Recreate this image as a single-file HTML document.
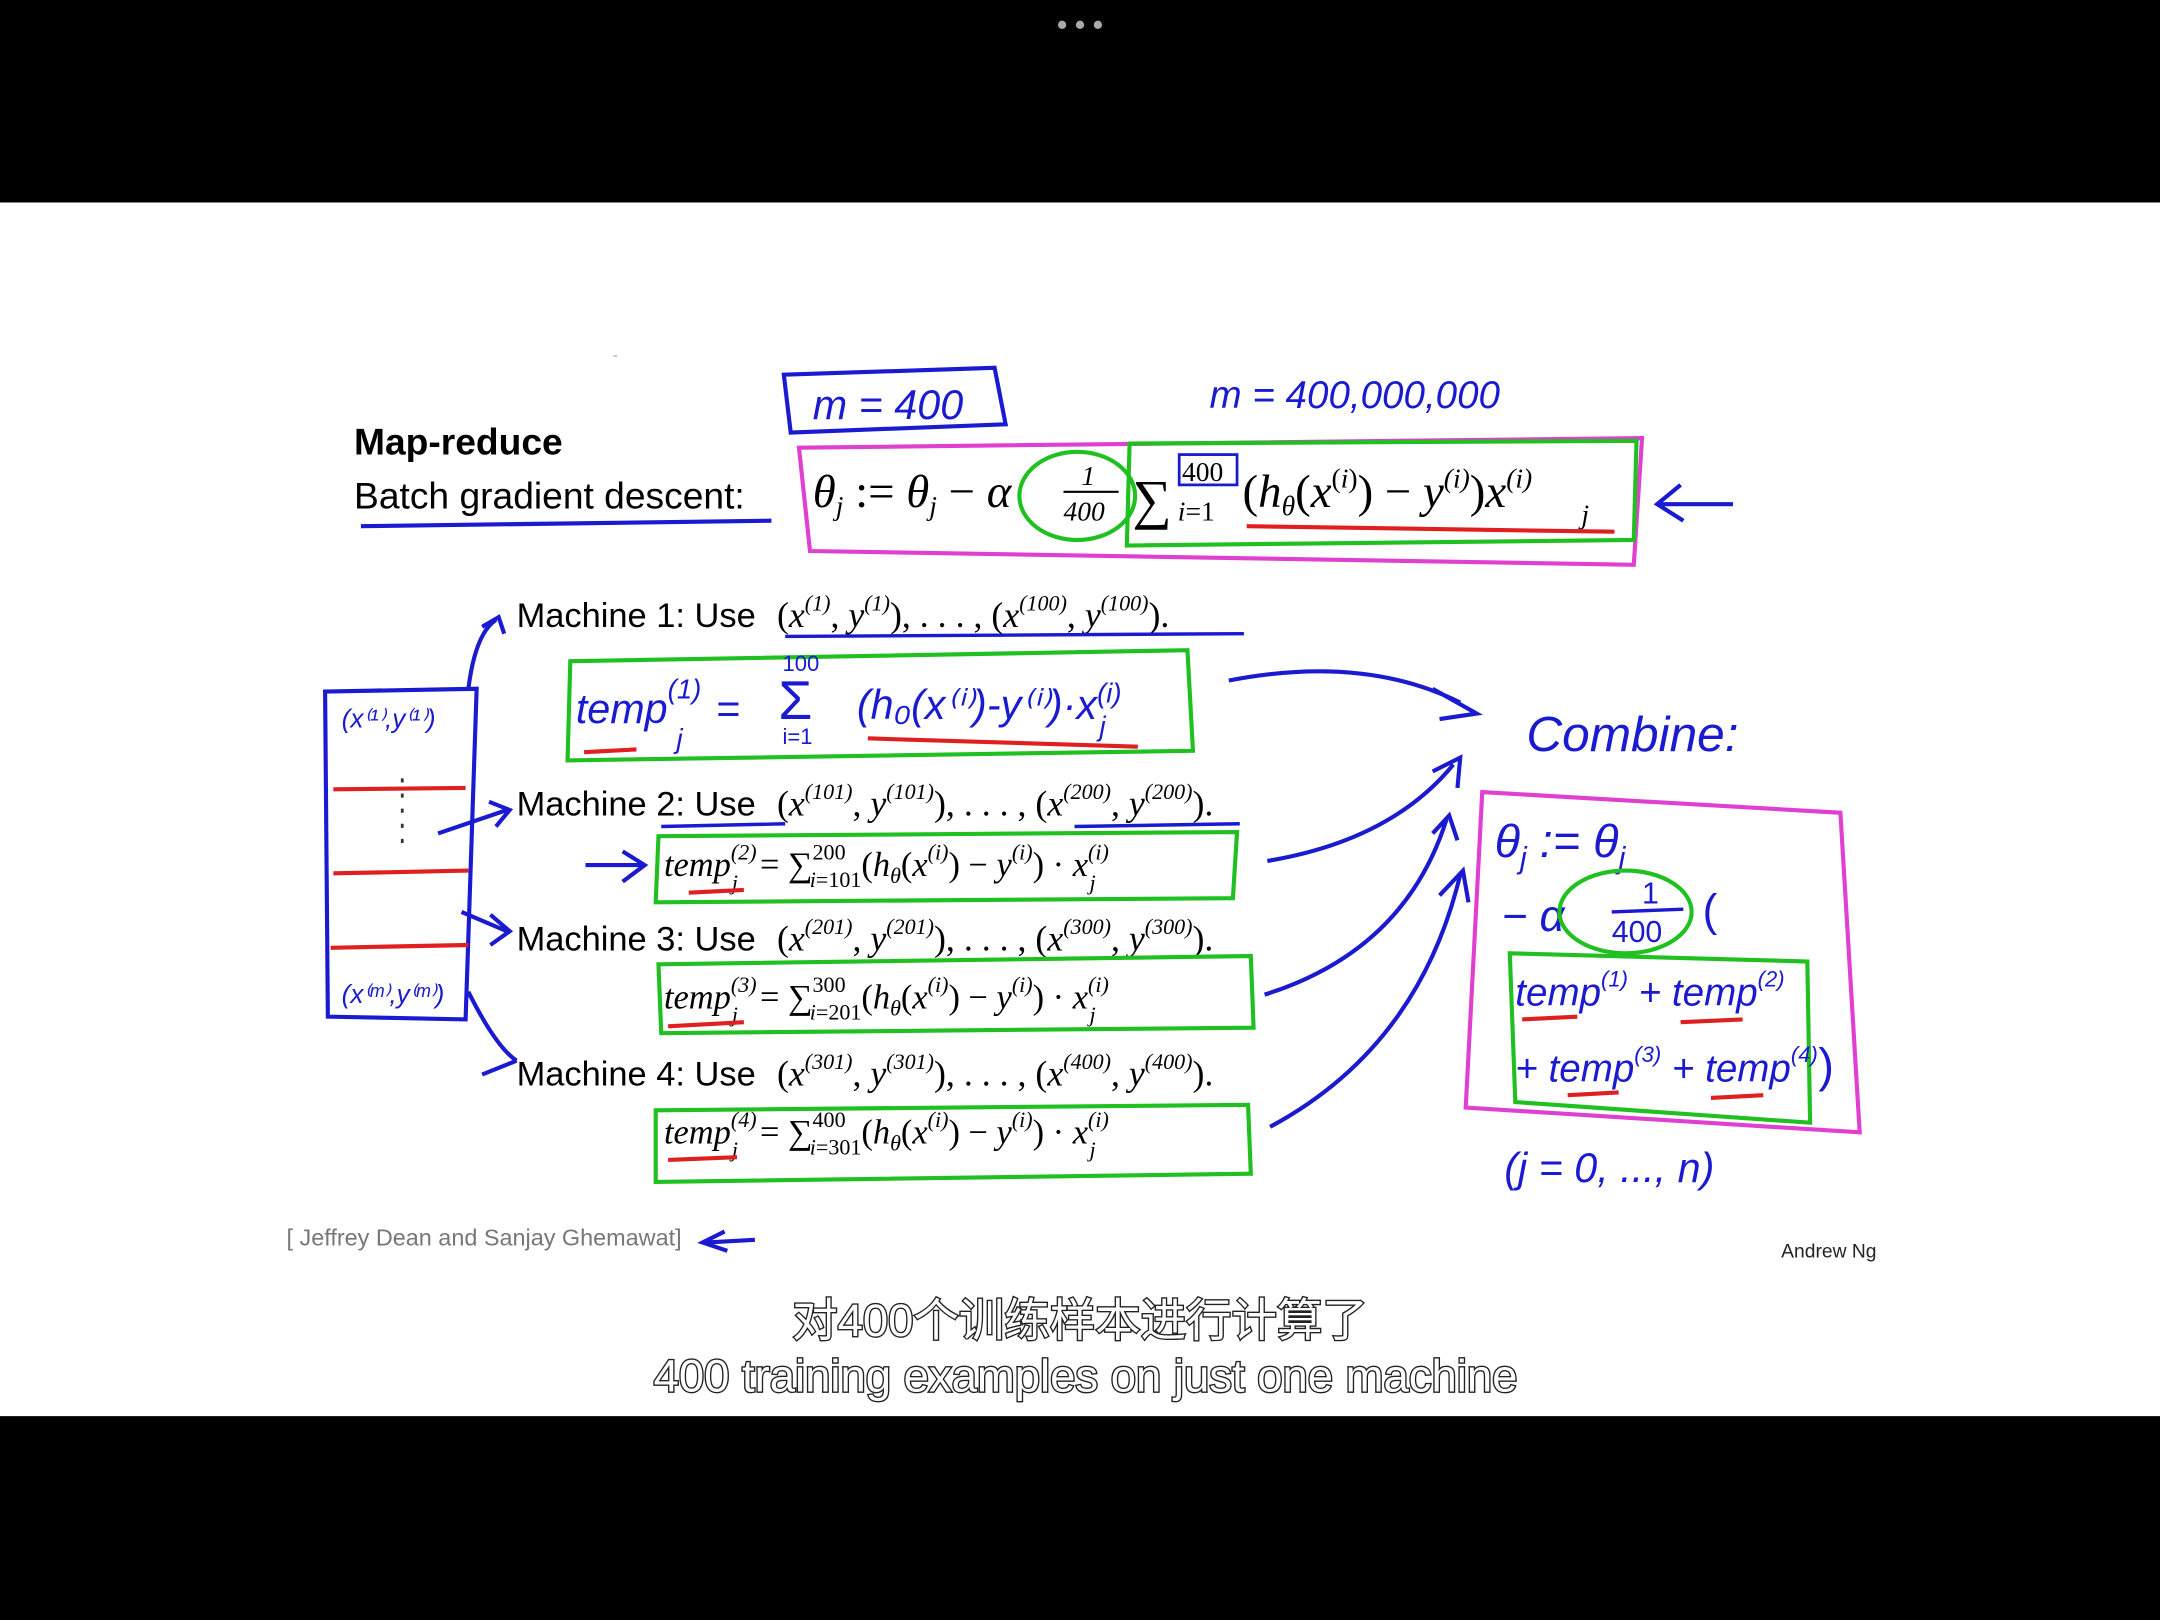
<!DOCTYPE html>
<html><head><meta charset="utf-8"><style>
html,body{margin:0;padding:0;background:#000;width:2160px;height:1620px;overflow:hidden}
svg{display:block}
.s{font-family:"Liberation Sans",sans-serif}
.m{font-family:"Liberation Serif",serif;font-style:italic}
.h{font-family:"Liberation Sans",sans-serif;fill:#1a1ad0}
</style></head><body>
<svg width="2160" height="1620" viewBox="0 0 1568 1176" xmlns="http://www.w3.org/2000/svg">
<rect x="0" y="0" width="1568" height="1176" fill="#000"/>
<rect x="0" y="147" width="1568" height="881" fill="#fff"/>
<circle cx="771" cy="18" r="3" fill="#aaa"/><circle cx="784" cy="18" r="3" fill="#aaa"/><circle cx="797" cy="18" r="3" fill="#aaa"/>

<text x="257" y="330" class="s" font-size="27" font-weight="bold">Map-reduce</text>
<text x="257" y="369" class="s" font-size="27">Batch gradient descent:</text>
<path d="M262 382 L560 378" stroke="#1a1ad0" stroke-width="3" fill="none"/>

<path d="M569 272 L722 267 L730 308 L574 314 Z" stroke="#1a1ad0" stroke-width="3" fill="none"/>
<text x="590" y="304" class="h" font-size="30" font-style="italic">m = 400</text>
<text x="878" y="296" class="h" font-size="28" font-style="italic">m = 400,000,000</text>

<path d="M580 325 L1192 318 L1186 410 L588 400 Z" stroke="#e040d0" stroke-width="3" fill="none"/>
<path d="M820 322 L1188 320 L1186 392 L818 396 Z" stroke="#20c020" stroke-width="3" fill="none"/>
<ellipse cx="782" cy="360" rx="42" ry="32" stroke="#20c020" stroke-width="3" fill="none"/>
<text x="590" y="368" class="m" font-size="34">θ<tspan font-size="20" dy="6">j</tspan><tspan dy="-6" font-style="normal"> := </tspan>θ<tspan font-size="20" dy="6">j</tspan><tspan dy="-6" font-style="normal"> − </tspan>α</text>
<text x="785" y="352" class="m" font-size="20" font-style="normal">1</text>
<path d="M772 357 L812 357" stroke="#000" stroke-width="1.5"/>
<text x="772" y="378" class="m" font-size="20" font-style="normal">400</text>
<text x="822" y="376" font-family="Liberation Serif,serif" font-size="40">∑</text>
<rect x="856" y="330" width="42" height="22" stroke="#1a1ad0" stroke-width="2" fill="none"/>
<text x="858" y="349" font-family="Liberation Serif,serif" font-size="20">400</text>
<text x="855" y="378" class="m" font-size="20">i<tspan font-style="normal">=1</tspan></text>
<text x="902" y="368" class="m" font-size="34"><tspan font-style="normal">(</tspan>h<tspan font-size="20" dy="6">θ</tspan><tspan dy="-6" font-style="normal">(</tspan>x<tspan font-size="20" dy="-14" font-style="normal">(</tspan><tspan font-size="20">i</tspan><tspan font-size="20" font-style="normal">)</tspan><tspan dy="14" font-style="normal">) − </tspan>y<tspan font-size="20" dy="-14">(i)</tspan><tspan dy="14" font-style="normal">)</tspan>x<tspan font-size="20" dy="-14">(i)</tspan></text>
<text x="1148" y="380" class="m" font-size="20">j</text>
<path d="M905 382 L1172 386" stroke="#e02020" stroke-width="3"/>
<path d="M1205 366 L1258 366 M1220 352 L1203 366 L1222 378" stroke="#1a1ad0" stroke-width="3" fill="none"/>

<path d="M236 502 L346 500 L338 740 L238 738 Z" stroke="#1a1ad0" stroke-width="3" fill="none"/>
<path d="M242 573 L338 572 M242 634 L340 632 M240 688 L340 686" stroke="#e02020" stroke-width="3"/>
<path d="M292 565 L292 620" stroke="#333" stroke-width="2" stroke-dasharray="3 8"/>
<text x="248" y="528" class="h" font-size="19" font-style="italic">(x⁽¹⁾,y⁽¹⁾)</text>
<text x="248" y="728" class="h" font-size="19" font-style="italic">(x⁽ᵐ⁾,y⁽ᵐ⁾)</text>
<path d="M340 500 Q345 460 360 450 M350 455 L362 448 L366 460" stroke="#1a1ad0" stroke-width="3" fill="none"/>
<path d="M318 605 L368 588 M355 582 L370 588 L360 600" stroke="#1a1ad0" stroke-width="3" fill="none"/>
<path d="M335 662 L368 676 M356 664 L370 676 L356 686" stroke="#1a1ad0" stroke-width="3" fill="none"/>
<path d="M340 720 Q360 760 375 770 M350 780 L375 770" stroke="#1a1ad0" stroke-width="3" fill="none"/>

<g class="s" font-size="25">
<text x="375" y="455">Machine 1: Use</text>
<text x="375" y="592">Machine 2: Use</text>
<text x="375" y="690">Machine 3: Use</text>
<text x="375" y="788">Machine 4: Use</text>
</g>
<g class="m" font-size="26">
<text x="564" y="455"><tspan font-style="normal">(</tspan>x<tspan font-size="16" dy="-12">(1)</tspan><tspan dy="12" font-style="normal">, </tspan>y<tspan font-size="16" dy="-12">(1)</tspan><tspan dy="12" font-style="normal">), . . . , (</tspan>x<tspan font-size="16" dy="-12">(100)</tspan><tspan dy="12" font-style="normal">, </tspan>y<tspan font-size="16" dy="-12">(100)</tspan><tspan dy="12" font-style="normal">).</tspan></text>
<text x="564" y="592"><tspan font-style="normal">(</tspan>x<tspan font-size="16" dy="-12">(101)</tspan><tspan dy="12" font-style="normal">, </tspan>y<tspan font-size="16" dy="-12">(101)</tspan><tspan dy="12" font-style="normal">), . . . , (</tspan>x<tspan font-size="16" dy="-12">(200)</tspan><tspan dy="12" font-style="normal">, </tspan>y<tspan font-size="16" dy="-12">(200)</tspan><tspan dy="12" font-style="normal">).</tspan></text>
<text x="564" y="690"><tspan font-style="normal">(</tspan>x<tspan font-size="16" dy="-12">(201)</tspan><tspan dy="12" font-style="normal">, </tspan>y<tspan font-size="16" dy="-12">(201)</tspan><tspan dy="12" font-style="normal">), . . . , (</tspan>x<tspan font-size="16" dy="-12">(300)</tspan><tspan dy="12" font-style="normal">, </tspan>y<tspan font-size="16" dy="-12">(300)</tspan><tspan dy="12" font-style="normal">).</tspan></text>
<text x="564" y="788"><tspan font-style="normal">(</tspan>x<tspan font-size="16" dy="-12">(301)</tspan><tspan dy="12" font-style="normal">, </tspan>y<tspan font-size="16" dy="-12">(301)</tspan><tspan dy="12" font-style="normal">), . . . , (</tspan>x<tspan font-size="16" dy="-12">(400)</tspan><tspan dy="12" font-style="normal">, </tspan>y<tspan font-size="16" dy="-12">(400)</tspan><tspan dy="12" font-style="normal">).</tspan></text>
</g>
<path d="M570 462 L903 460" stroke="#1a1ad0" stroke-width="2.5"/>
<path d="M480 600 L570 598 M780 600 L900 598" stroke="#1a1ad0" stroke-width="2.5"/>

<path d="M414 480 L862 472 L866 545 L412 552 Z" stroke="#20c020" stroke-width="3" fill="none"/>
<text x="418" y="525" class="h" font-size="30" font-style="italic">temp<tspan font-size="20" dy="-18">(1)</tspan><tspan font-size="20" dx="-18" dy="36">j</tspan><tspan dy="-18" dx="24">=</tspan></text>
<text x="565" y="522" class="h" font-size="40">Σ</text>
<text x="568" y="487" class="h" font-size="16">100</text>
<text x="568" y="540" class="h" font-size="16">i=1</text>
<text x="622" y="522" class="h" font-size="30" font-style="italic">(h₀(x⁽ⁱ⁾)-y⁽ⁱ⁾)·x<tspan font-size="20" dy="-12">(i)</tspan><tspan font-size="20" dx="-16" dy="24">j</tspan></text>
<path d="M424 546 L462 544 M630 536 L826 542" stroke="#e02020" stroke-width="3"/>

<g class="m" font-size="25">
<path d="M478 607 L898 604 L895 652 L476 655 Z" stroke="#20c020" stroke-width="3" fill="none"/>
<text x="482" y="636">temp<tspan font-size="16" dy="-12">(2)</tspan><tspan font-size="16" dx="-18" dy="22">j</tspan><tspan dy="-10" dx="16" font-style="normal">= ∑</tspan><tspan font-size="16" dy="-12" font-style="normal">200</tspan><tspan font-size="16" dx="-26" dy="20">i<tspan font-style="normal">=101</tspan></tspan><tspan dy="-8" font-style="normal">(</tspan>h<tspan font-size="16" dy="5">θ</tspan><tspan dy="-5" font-style="normal">(</tspan>x<tspan font-size="16" dy="-12">(i)</tspan><tspan dy="12" font-style="normal">) − </tspan>y<tspan font-size="16" dy="-12">(i)</tspan><tspan dy="12" font-style="normal">) · </tspan>x<tspan font-size="16" dy="-12">(i)</tspan><tspan font-size="16" dx="-14" dy="22">j</tspan></text>
<path d="M478 700 L908 694 L910 746 L480 750 Z" stroke="#20c020" stroke-width="3" fill="none"/>
<text x="482" y="732">temp<tspan font-size="16" dy="-12">(3)</tspan><tspan font-size="16" dx="-18" dy="22">j</tspan><tspan dy="-10" dx="16" font-style="normal">= ∑</tspan><tspan font-size="16" dy="-12" font-style="normal">300</tspan><tspan font-size="16" dx="-26" dy="20">i<tspan font-style="normal">=201</tspan></tspan><tspan dy="-8" font-style="normal">(</tspan>h<tspan font-size="16" dy="5">θ</tspan><tspan dy="-5" font-style="normal">(</tspan>x<tspan font-size="16" dy="-12">(i)</tspan><tspan dy="12" font-style="normal">) − </tspan>y<tspan font-size="16" dy="-12">(i)</tspan><tspan dy="12" font-style="normal">) · </tspan>x<tspan font-size="16" dy="-12">(i)</tspan><tspan font-size="16" dx="-14" dy="22">j</tspan></text>
<path d="M476 806 L906 802 L908 852 L476 858 Z" stroke="#20c020" stroke-width="3" fill="none"/>
<text x="482" y="830">temp<tspan font-size="16" dy="-12">(4)</tspan><tspan font-size="16" dx="-18" dy="22">j</tspan><tspan dy="-10" dx="16" font-style="normal">= ∑</tspan><tspan font-size="16" dy="-12" font-style="normal">400</tspan><tspan font-size="16" dx="-26" dy="20">i<tspan font-style="normal">=301</tspan></tspan><tspan dy="-8" font-style="normal">(</tspan>h<tspan font-size="16" dy="5">θ</tspan><tspan dy="-5" font-style="normal">(</tspan>x<tspan font-size="16" dy="-12">(i)</tspan><tspan dy="12" font-style="normal">) − </tspan>y<tspan font-size="16" dy="-12">(i)</tspan><tspan dy="12" font-style="normal">) · </tspan>x<tspan font-size="16" dy="-12">(i)</tspan><tspan font-size="16" dx="-14" dy="22">j</tspan></text>
</g>
<path d="M500 648 L540 646 M485 745 L540 742 M485 842 L535 840" stroke="#e02020" stroke-width="3"/>
<path d="M425 628 L466 628 M452 618 L468 628 L452 640" stroke="#1a1ad0" stroke-width="3" fill="none"/>

<g stroke="#1a1ad0" stroke-width="3" fill="none">
<path d="M892 494 Q990 475 1060 510 M1040 500 L1072 518 L1045 522"/>
<path d="M920 625 Q1010 610 1055 555 M1040 560 L1060 550 L1058 572"/>
<path d="M918 722 Q1020 690 1050 595 M1040 605 L1052 592 L1058 610"/>
<path d="M922 818 Q1030 760 1060 635 M1045 650 L1062 632 L1066 655"/>
<path d="M512 902 L548 900 M526 894 L510 902 L528 908"/>
</g>

<text x="1108" y="545" class="h" font-size="36" font-style="italic">Combine:</text>
<path d="M1076 575 L1336 590 L1350 822 L1064 804 Z" stroke="#e040d0" stroke-width="3" fill="none"/>
<text x="1085" y="622" class="h" font-size="34" font-style="italic">θ<tspan font-size="22" dy="8">j</tspan><tspan dy="-8"> := θ</tspan><tspan font-size="22" dy="8">j</tspan></text>
<text x="1090" y="676" class="h" font-size="32" font-style="italic">− α</text>
<ellipse cx="1180" cy="662" rx="48" ry="30" stroke="#20c020" stroke-width="3" fill="none"/>
<text x="1192" y="656" class="h" font-size="22">1</text>
<path d="M1170 662 L1222 660" stroke="#1a1ad0" stroke-width="2.5"/>
<text x="1170" y="684" class="h" font-size="22">400</text>
<text x="1236" y="672" class="h" font-size="32">(</text>
<path d="M1096 692 L1312 698 L1314 815 L1100 800 Z" stroke="#20c020" stroke-width="3" fill="none"/>
<text x="1100" y="730" class="h" font-size="28" font-style="italic">temp<tspan font-size="16" dy="-14">(1)</tspan><tspan dy="14"> + temp</tspan><tspan font-size="16" dy="-14">(2)</tspan></text>
<text x="1100" y="785" class="h" font-size="28" font-style="italic">+ temp<tspan font-size="16" dy="-14">(3)</tspan><tspan dy="14"> + temp</tspan><tspan font-size="16" dy="-14">(4)</tspan></text>
<text x="1320" y="785" class="h" font-size="34">)</text>
<path d="M1105 740 L1145 738 M1220 742 L1265 740 M1138 795 L1175 793 M1242 797 L1280 795" stroke="#e02020" stroke-width="3"/>
<text x="1092" y="858" class="h" font-size="30" font-style="italic">(j = 0, ..., n)</text>

<text x="208" y="904" class="s" font-size="17" fill="#777">[ Jeffrey Dean and Sanjay Ghemawat]</text>
<text x="1293" y="913" class="s" font-size="14" fill="#222">Andrew Ng</text>
<text x="445" y="261" class="s" font-size="10" fill="#99a">-</text>

<g font-family="Liberation Sans, Noto Sans CJK SC, sans-serif" fill="#fff" stroke="#222" stroke-width="2" paint-order="stroke" text-anchor="middle">
<text x="784" y="970" font-size="33">对400个训练样本进行计算了</text>
<text x="788" y="1010" font-size="33">400 training examples on just one machine</text>
</g>
</svg>
</body></html>
